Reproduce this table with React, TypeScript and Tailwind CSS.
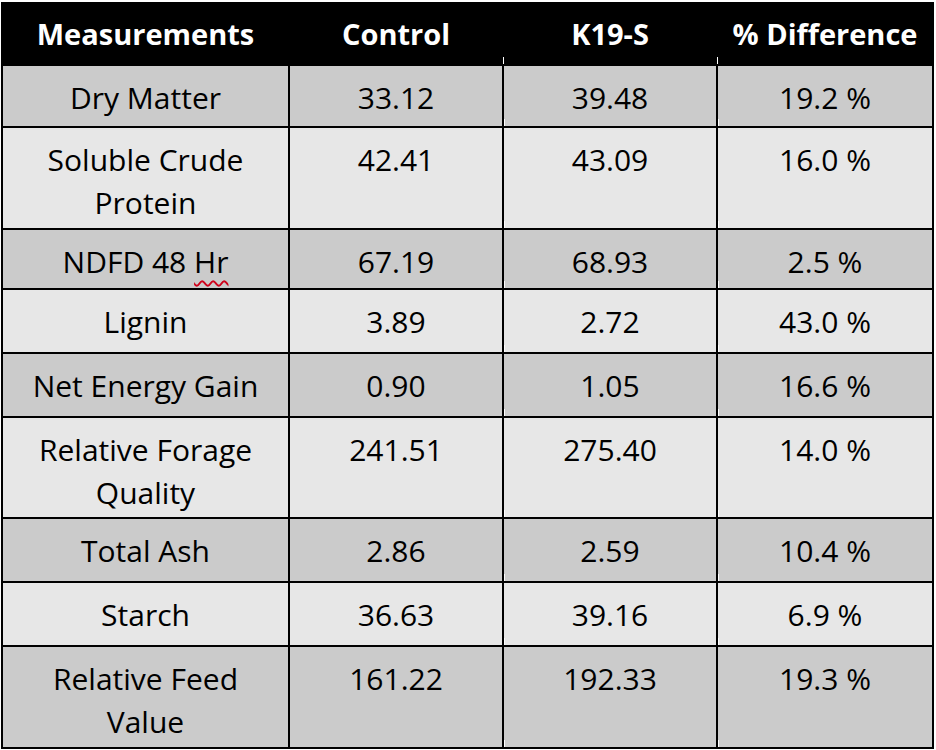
import React from "react";

type Row = {
  label: React.ReactNode;
  control: string;
  k19: string;
  diff: string;
  h: string;
  dark: boolean;
};

const rows: Row[] = [
  { label: "Dry Matter", control: "33.12", k19: "39.48", diff: "19.2 %", h: "h-[60px]", dark: true },
  { label: <>Soluble Crude<br />Protein</>, control: "42.41", k19: "43.09", diff: "16.0 %", h: "h-[100px]", dark: false },
  {
    label: (
      <>
        NDFD 48{" "}
        <span className="underline decoration-wavy decoration-[#d0021b] decoration-[1.5px] underline-offset-[7px]">Hr</span>
      </>
    ),
    control: "67.19",
    k19: "68.93",
    diff: "2.5 %",
    h: "h-[58px]",
    dark: true,
  },
  { label: "Lignin", control: "3.89", k19: "2.72", diff: "43.0 %", h: "h-[62px]", dark: false },
  { label: "Net Energy Gain", control: "0.90", k19: "1.05", diff: "16.6 %", h: "h-[62px]", dark: true },
  { label: <>Relative Forage<br />Quality</>, control: "241.51", k19: "275.40", diff: "14.0 %", h: "h-[99px]", dark: false },
  { label: "Total Ash", control: "2.86", k19: "2.59", diff: "10.4 %", h: "h-[62px]", dark: true },
  { label: "Starch", control: "36.63", k19: "39.16", diff: "6.9 %", h: "h-[62px]", dark: false },
  { label: <>Relative Feed<br />Value</>, control: "161.22", k19: "192.33", diff: "19.3 %", h: "h-[100px]", dark: true },
];

// tiny white tick the slide export leaves at the foot of some column lines
function Tick() {
  return <span className="absolute bottom-0 left-0 w-[1px] h-[7px] bg-white" />;
}

function Cell({ children, row, tick = false }: { children: React.ReactNode; row: Row; tick?: boolean }) {
  return (
    <div
      className={`relative ${row.h} ${row.dark ? "bg-[#cbcbcb]" : "bg-[#e7e7e7]"} pt-[10px] text-center text-[30px] leading-[43px] text-black`}
    >
      {children}
      {tick && <Tick />}
    </div>
  );
}

export default function App() {
  return (
    <div className="min-h-[750px] bg-white pt-[2px] pl-[1px]" style={{ fontFamily: '"Open Sans", "Noto Sans", sans-serif' }}>
      <div className="grid w-[933px] grid-cols-[285px_212px_212px_214px] gap-[2px] bg-black p-[2px] pt-0">
        {["Measurements", "Control", "K19-S", "% Difference"].map((h, i) => (
          <div key={h} className="relative h-[62px] pt-[10px] text-center text-[29px] font-bold leading-[43px] text-white">
            {h}
            {i >= 2 && <span className="absolute bottom-0 left-[-1px] w-[1px] h-[7px] bg-white" />}
          </div>
        ))}
        {rows.map((r, i) => (
          <React.Fragment key={i}>
            <Cell row={r}>{r.label}</Cell>
            <Cell row={r}>{r.control}</Cell>
            <Cell row={r} tick>
              {r.k19}
            </Cell>
            <Cell row={r} tick>
              {r.diff}
            </Cell>
          </React.Fragment>
        ))}
      </div>
    </div>
  );
}
